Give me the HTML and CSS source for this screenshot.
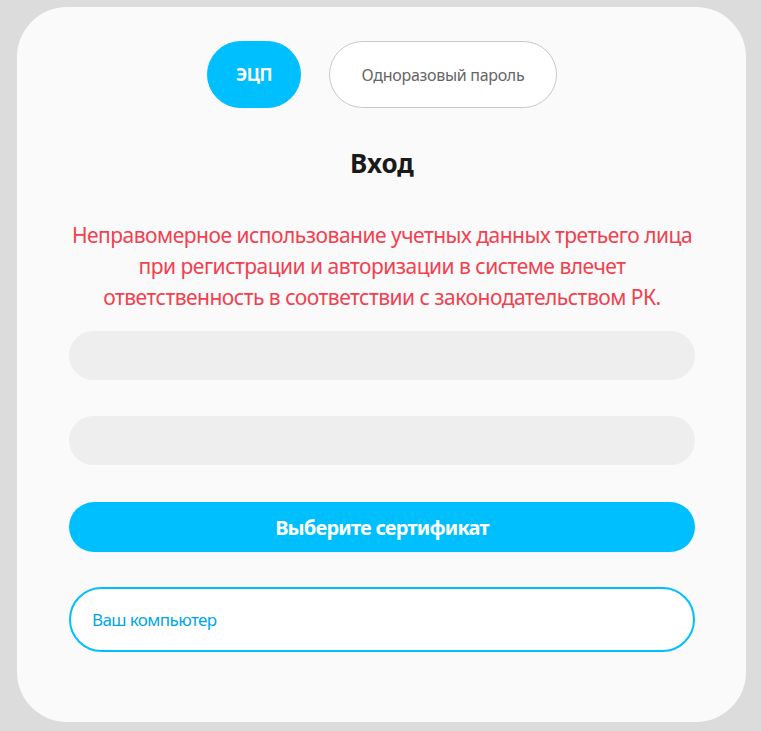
FILE: index.html
```html
<!DOCTYPE html>
<html lang="ru">
<head>
    <meta charset="UTF-8">
    <meta name="viewport" content="width=device-width, initial-scale=1.0">
    <title>Вход</title>
    <link rel="stylesheet" href="styles.css">
</head>
<body>
    <div class="card">
        <div class="tabs">
            <button class="tab active">ЭЦП</button>
            <button class="tab">Одноразовый пароль</button>
        </div>

        <h1 class="title">Вход</h1>

        <p class="warning">Неправомерное использование учетных данных третьего лица при регистрации и авторизации в системе влечет ответственность в соответствии с законодательством РК.</p>

        <input type="text" class="field">
        <input type="password" class="field">

        <button class="submit">Выберите сертификат</button>

        <div class="source">Ваш компьютер</div>
    </div>
</body>
</html>
```

FILE: styles.css
```css
body {
    margin: 0;
    background-color: #dcdcdc;
    font-family: "Noto Sans", sans-serif;
}
.card {
    box-sizing: border-box;
    width: 729px;
    height: 715px;
    margin: 7px 15px 0 17px;
    padding: 34px 51px 0 52px;
    background-color: #fafafa;
    border-radius: 50px;
}
.tabs {
    display: flex;
    justify-content: center;
    gap: 28px;
}
.tab {
    box-sizing: border-box;
    height: 67px;
    width: 228px;
    padding: 0;
    border: 1px solid #c8c8c8;
    border-radius: 34px;
    background-color: #fff;
    color: #666;
    font-family: inherit;
    font-size: 16px;
    letter-spacing: -0.3px;
}
.tab.active {
    width: 94px;
    border-color: #00bfff;
    background-color: #00bfff;
    color: #fff;
    font-weight: bold;
    font-size: 17px;
    letter-spacing: -0.5px;
}
.title {
    margin: 37px 0 0;
    text-align: center;
    font-size: 26px;
    line-height: 36px;
    color: #1a1a1a;
}
.warning {
    margin: 39px 0 18px;
    text-align: center;
    font-size: 21px;
    line-height: 31px;
    letter-spacing: -0.5px;
    color: #f2404f;
}
.field {
    display: block;
    box-sizing: border-box;
    width: 100%;
    height: 49px;
    margin-bottom: 36px;
    border: none;
    border-radius: 25px;
    background-color: #eeeeee;
}
.submit {
    display: block;
    width: 100%;
    height: 50px;
    margin-top: 37px;
    border: none;
    border-radius: 25px;
    background-color: #00bfff;
    color: #fff;
    font-family: inherit;
    font-weight: bold;
    font-size: 20px;
    letter-spacing: -0.8px;
}
.source {
    box-sizing: border-box;
    height: 65px;
    margin-top: 35px;
    padding: 0 21px;
    border: 2px solid #00bfff;
    border-radius: 33px;
    background-color: #fff;
    color: #00a7e6;
    font-size: 17px;
    line-height: 62px;
    letter-spacing: -0.6px;
}
```
